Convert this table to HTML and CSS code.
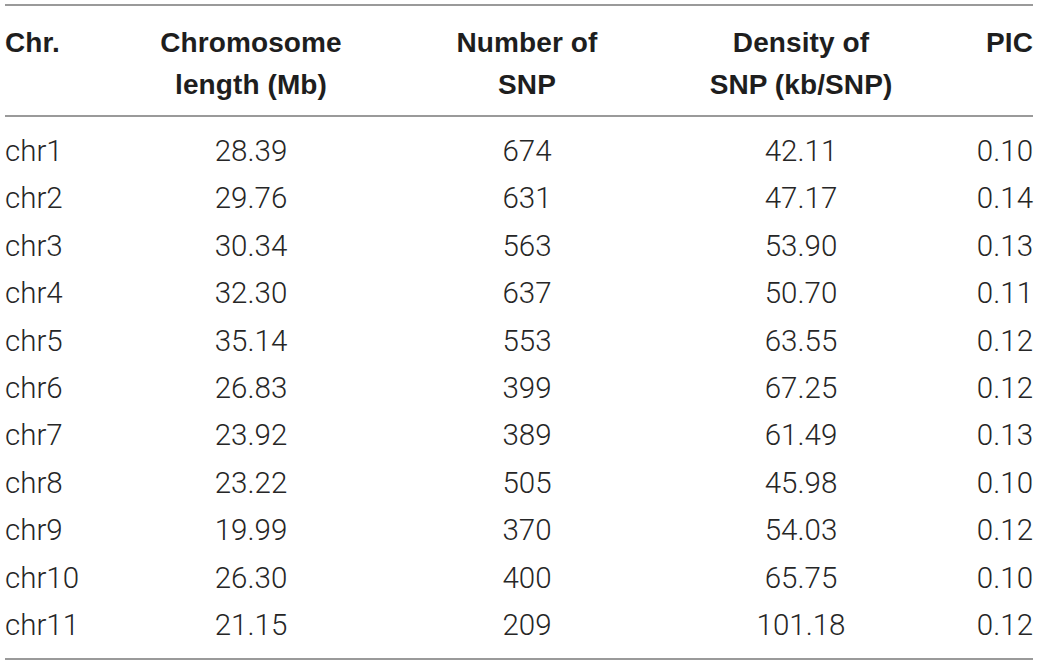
FILE: index.html
```html
<!DOCTYPE html>
<html>
<head>
<meta charset="utf-8">
<link rel="stylesheet" href="styles.css">
</head>
<body>
<div class="wrap">
<table class="snp">
<colgroup>
<col class="c1"><col class="c2"><col class="c3"><col class="c4"><col class="c5">
</colgroup>
<thead>
<tr>
<th class="left">Chr.</th>
<th>Chromosome<br>length (Mb)</th>
<th>Number of<br>SNP</th>
<th>Density of<br>SNP (kb/SNP)</th>
<th class="right">PIC</th>
</tr>
</thead>
<tbody>
<tr><td class="left">chr1</td><td>28.39</td><td>674</td><td>42.11</td><td class="right">0.10</td></tr>
<tr><td class="left">chr2</td><td>29.76</td><td>631</td><td>47.17</td><td class="right">0.14</td></tr>
<tr><td class="left">chr3</td><td>30.34</td><td>563</td><td>53.90</td><td class="right">0.13</td></tr>
<tr><td class="left">chr4</td><td>32.30</td><td>637</td><td>50.70</td><td class="right">0.11</td></tr>
<tr><td class="left">chr5</td><td>35.14</td><td>553</td><td>63.55</td><td class="right">0.12</td></tr>
<tr><td class="left">chr6</td><td>26.83</td><td>399</td><td>67.25</td><td class="right">0.12</td></tr>
<tr><td class="left">chr7</td><td>23.92</td><td>389</td><td>61.49</td><td class="right">0.13</td></tr>
<tr><td class="left">chr8</td><td>23.22</td><td>505</td><td>45.98</td><td class="right">0.10</td></tr>
<tr><td class="left">chr9</td><td>19.99</td><td>370</td><td>54.03</td><td class="right">0.12</td></tr>
<tr><td class="left">chr10</td><td>26.30</td><td>400</td><td>65.75</td><td class="right">0.10</td></tr>
<tr><td class="left">chr11</td><td>21.15</td><td>209</td><td>101.18</td><td class="right">0.12</td></tr>
</tbody>
</table>
</div>
</body>
</html>
```
FILE: styles.css
```css
html, body {
  margin: 0;
  padding: 0;
  background: #ffffff;
}
.wrap {
  padding: 4px 6px 0 5px;
}
.snp {
  width: 1028px;
  border-collapse: collapse;
  table-layout: fixed;
  border-top: 2px solid #9a9a9a;
  border-bottom: 2px solid #9a9a9a;
  font-family: "Liberation Sans", Arial, sans-serif;
  color: #222222;
}
.c1 { width: 108px; }
.c2 { width: 276px; }
.c3 { width: 276px; }
.c4 { width: 272px; }
.c5 { width: 96px; }
.snp th {
  font-weight: bold;
  font-size: 28px;
  line-height: 42px;
  letter-spacing: 0.1px;
  text-align: center;
  vertical-align: top;
  padding: 16px 0 9px 0;
  border-bottom: 2px solid #9a9a9a;
  color: #1e1e1e;
}
.snp td {
  font-family: "Roboto", "Liberation Sans", sans-serif;
  font-weight: 300;
  font-size: 29.5px;
  line-height: 47.4px;
  text-align: center;
  padding: 0;
  color: #262626;
}
.snp tbody tr:first-child td { padding-top: 11px; }
.snp tbody tr:last-child td { padding-bottom: 9px; }
.snp .left { text-align: left; }
.snp .right { text-align: right; }
```
